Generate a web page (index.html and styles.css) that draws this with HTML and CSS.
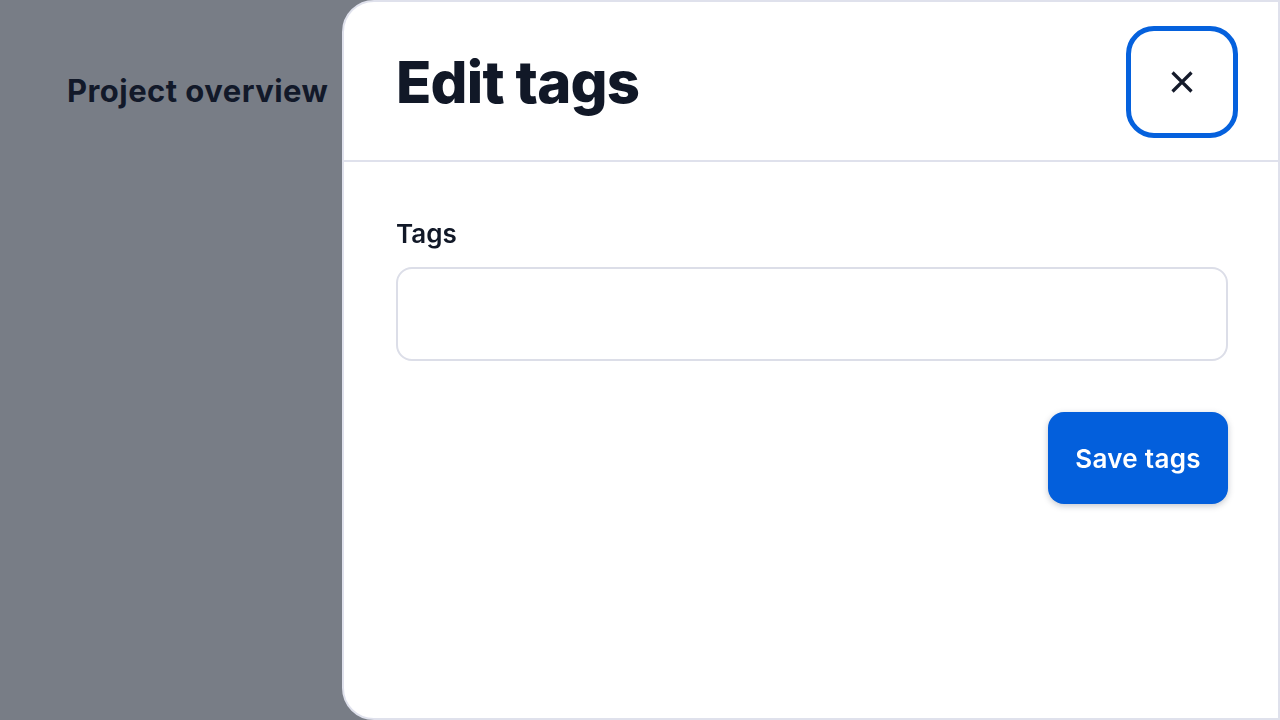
FILE: index.html
```html
<!DOCTYPE html>
<html lang="en">
<head>
<meta charset="utf-8">
<title>Edit tags</title>
<link rel="stylesheet" href="styles.css">
</head>
<body>
<main class="page">
  <h1 class="page-title">Project overview</h1>
</main>
<div class="overlay">
  <aside class="drawer" role="dialog" aria-labelledby="drawer-title">
    <header class="drawer-head">
      <h2 id="drawer-title" class="drawer-title">Edit tags</h2>
      <button class="close-btn" aria-label="Close">
        <svg width="24" height="24" viewBox="0 0 24 24" fill="none" stroke="#141a2a" stroke-width="3.2" stroke-linecap="butt">
          <path d="M2.5 2.5 L21.5 21.5 M21.5 2.5 L2.5 21.5"/>
        </svg>
      </button>
    </header>
    <div class="drawer-body">
      <label class="field-label" for="tags">Tags</label>
      <input id="tags" class="field-input" type="text">
      <div class="actions">
        <button class="save-btn">Save tags</button>
      </div>
    </div>
  </aside>
</div>
</body>
</html>
```
FILE: styles.css
```css
html, body {
  margin: 0;
  height: 100%;
}
body {
  font-family: "Inter", "Noto Sans", sans-serif;
  color: #111827;
  background: #ffffff;
  overflow: hidden;
}
.page {
  padding: 72px 0 0 67px;
}
.page-title {
  margin: 0;
  font-size: 31px;
  font-weight: 700;
  letter-spacing: 0.45px;
  color: #020617;
}
.overlay {
  position: fixed;
  inset: 0;
  background: rgba(30, 38, 54, 0.6);
  display: flex;
  justify-content: flex-end;
}
.drawer {
  width: 938px;
  box-sizing: border-box;
  height: 100%;
  background: #ffffff;
  border: 2px solid #dfe1ec;
  border-radius: 32px 0 0 32px;
  display: flex;
  flex-direction: column;
}
.drawer-head {
  display: flex;
  align-items: center;
  justify-content: space-between;
  padding: 24px 40px 22px 52px;
  border-bottom: 2px solid #dfe1ec;
}
.drawer-title {
  margin: 0;
  font-size: 58px;
  font-weight: 800;
  letter-spacing: -0.8px;
  color: #111827;
}
.close-btn {
  width: 112px;
  height: 112px;
  box-sizing: border-box;
  border: 5px solid #0561dd;
  border-radius: 28px;
  background: #ffffff;
  display: flex;
  align-items: center;
  justify-content: center;
  padding: 0;
  cursor: pointer;
}
.drawer-body {
  padding: 56px 50px 0 52px;
  display: flex;
  flex-direction: column;
}
.field-label {
  font-size: 26px;
  font-weight: 600;
  color: #111827;
  margin-bottom: 18px;
}
.field-input {
  height: 94px;
  box-sizing: border-box;
  border: 2px solid #dcdee8;
  border-radius: 16px;
  font: inherit;
  padding: 0 20px;
  outline: none;
}
.actions {
  display: flex;
  justify-content: flex-end;
  margin-top: 51px;
}
.save-btn {
  width: 180px;
  height: 92px;
  border: none;
  border-radius: 16px;
  background: #035fdc;
  color: #ffffff;
  font-family: inherit;
  font-size: 26px;
  font-weight: 600;
  letter-spacing: 0.3px;
  box-shadow: 0 2px 6px rgba(20, 30, 60, 0.25);
  cursor: pointer;
}
```
